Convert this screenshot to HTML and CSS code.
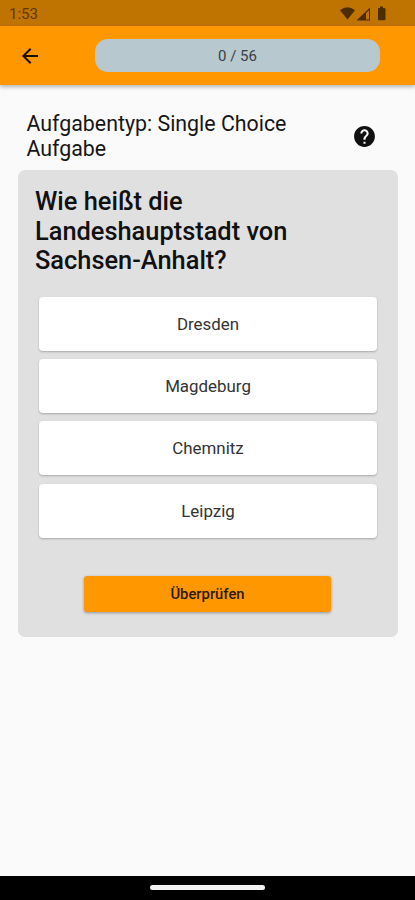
FILE: index.html
```html
<!DOCTYPE html>
<html lang="de">
<head>
<meta charset="utf-8">
<title>Single Choice Aufgabe</title>
<link rel="stylesheet" href="styles.css">
</head>
<body>
<div class="screen">
  <div class="status">
    <span class="time">1:53</span>
    <svg class="status-icons" width="48" height="16" viewBox="0 0 48 16">
      <path d="M0 4.200Q7.500 -1.500 15 4.200L7.500 13.500Z"/>
      <path fill-rule="evenodd" d="M16.500 14.500 30 1.500V14.500ZM26 7V13.500H29V4.200Z"/>
      <path d="M38 3Q38 2 39 2H40V.5H43V2H44Q45.500 2 45.500 3V13Q45.500 14.300 44.500 14.300H39Q38 14.300 38 13Z"/>
    </svg>
  </div>
  <header class="appbar">
    <svg class="back" width="24" height="24" viewBox="0 0 24 24"><path d="M20 11H7.830l5.590-5.590L12 4l-8 8 8 8 1.410-1.410L7.830 13H20z"/></svg>
    <div class="progress">0 / 56</div>
  </header>
  <main class="content">
    <div class="type-row">
      <h1 class="type">Aufgabentyp: Single Choice Aufgabe</h1>
      <svg class="help" width="25" height="25" viewBox="0 0 24 24"><path d="M12 2C6.480 2 2 6.480 2 12s4.480 10 10 10 10-4.480 10-10S17.520 2 12 2zm1 17h-2v-2h2v2zm2.070-7.750l-.9.920C13.450 12.900 13 13.500 13 15h-2v-.5c0-1.100.45-2.100 1.170-2.830l1.240-1.260c.37-.36.59-.86.59-1.410 0-1.100-.9-2-2-2s-2 .9-2 2H8c0-2.210 1.790-4 4-4s4 1.790 4 4c0 .88-.36 1.680-.93 2.250z"/></svg>
    </div>
    <section class="card">
      <h2 class="question">Wie heißt die Landeshauptstadt von Sachsen-Anhalt?</h2>
      <div class="options">
        <div class="option">Dresden</div>
        <div class="option">Magdeburg</div>
        <div class="option">Chemnitz</div>
        <div class="option">Leipzig</div>
      </div>
      <button class="check">Überprüfen</button>
    </section>
  </main>
  <footer class="navbar"><div class="handle"></div></footer>
</div>
</body>
</html>
```
FILE: styles.css
```css
* { box-sizing: border-box; }
body { margin: 0; font-family: Roboto, "Liberation Sans", sans-serif; color: #161616; }
.screen { width: 415px; height: 900px; display: flex; flex-direction: column; background: #fafafa; }
.status { height: 26px; padding: 0 27px 0 9px; display: flex; align-items: center; justify-content: space-between; background: #bf7300; color: #603a00; }
.time { font-size: 15px; line-height: 26px; padding-top: 2px; }
.status-icons { fill: #4b2d00; margin-top: 1px; }
.appbar { height: 59px; padding: 0 35px 0 18px; display: flex; align-items: center; background: #ff9800; box-shadow: 0 2px 4px rgba(0,0,0,.28); }
.back { fill: #1b1000; }
.progress { width: 285px; height: 33px; margin-left: auto; border-radius: 13px; background: #b7c8cf; color: #3a4144; font-size: 15px; line-height: 34px; text-align: center; }
.content { flex: 1; padding: 27px 17px 0 18px; }
.type-row { display: flex; align-items: center; justify-content: space-between; height: 49px; padding: 0 21px 0 8.500px; margin-bottom: 9px; }
.type { margin: 0; width: 290px; font-size: 21.350px; line-height: 24.500px; font-weight: 400; }
.help { fill: #111; margin-top: -1px; }
.card { height: 466.500px; padding: 17px 21px 0; border-radius: 7px; background: #e0e0e0; }
.question { margin: 0 0 21px -4px; width: 280px; font-size: 25.400px; line-height: 29.500px; font-weight: 500; color: #111; }
.options { display: flex; flex-direction: column; gap: 8.400px; }
.option { height: 54px; border-radius: 4px; background: #fff; box-shadow: 0 1px 2px rgba(0,0,0,.25); font-size: 16.900px; line-height: 54px; text-align: center; color: #333; }
.check { display: block; width: 247px; height: 36px; margin: 38px 0 0 45px; padding: 0; border: 0; border-radius: 3px; background: #ff9800; box-shadow: 0 1px 3px rgba(0,0,0,.35); font: 500 14.800px/37px Roboto, sans-serif; color: #2b1a00; }
.navbar { height: 24px; display: flex; justify-content: center; align-items: center; background: #000; }
.handle { width: 115px; height: 5px; margin-bottom: 1px; border-radius: 3px; background: #f2f2f2; }
```
